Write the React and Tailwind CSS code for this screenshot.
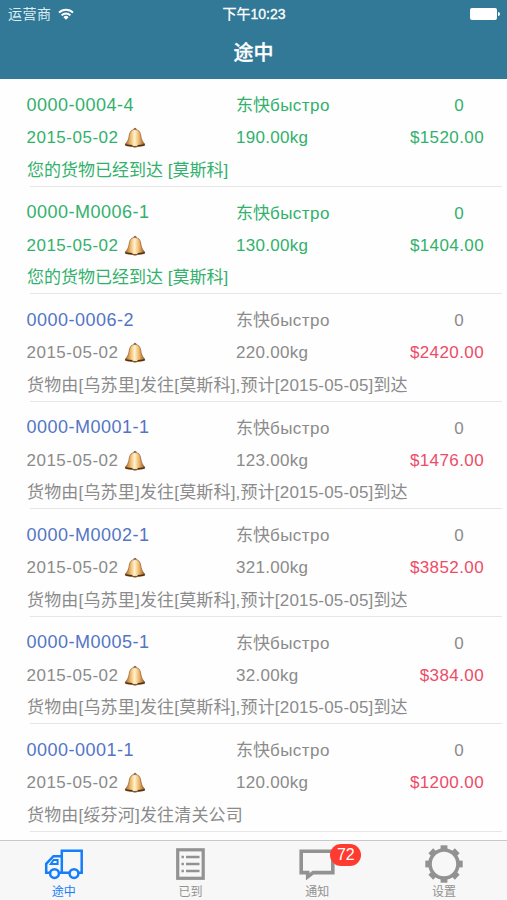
const SHIPMENTS = [
    { id: "0000-0004-4", weight: "190.00kg", price: "$1520.00", status: "您的货物已经到达 [莫斯科]", arrived: true },
    { id: "0000-M0006-1", weight: "130.00kg", price: "$1404.00", status: "您的货物已经到达 [莫斯科]", arrived: true },
    { id: "0000-0006-2", weight: "220.00kg", price: "$2420.00", status: "货物由[乌苏里]发往[莫斯科],预计[2015-05-05]到达" },
    { id: "0000-M0001-1", weight: "123.00kg", price: "$1476.00", status: "货物由[乌苏里]发往[莫斯科],预计[2015-05-05]到达" },
    { id: "0000-M0002-1", weight: "321.00kg", price: "$3852.00", status: "货物由[乌苏里]发往[莫斯科],预计[2015-05-05]到达" },
    { id: "0000-M0005-1", weight: "32.00kg", price: "$384.00", status: "货物由[乌苏里]发往[莫斯科],预计[2015-05-05]到达" },
    { id: "0000-0001-1", weight: "120.00kg", price: "$1200.00", status: "货物由[绥芬河]发往清关公司" },
];

const GEAR_ANGLES = [0, 45, 90, 135, 180, 225, 270, 315];

function Bell() {
    return (
        <svg width="22" height="22" viewBox="0 0 22 22" className="ml-[6px] shrink-0">
            <defs>
                <linearGradient id="bell" x1="0" x2="1" y1="0" y2="0">
                    <stop offset="0" stopColor="#a8672a" />
                    <stop offset="0.28" stopColor="#f0bd70" />
                    <stop offset="0.48" stopColor="#fff3cf" />
                    <stop offset="0.72" stopColor="#eeb465" />
                    <stop offset="1" stopColor="#8f5722" />
                </linearGradient>
            </defs>
            <circle cx="11" cy="2.2" r="1.5" fill="#8c6a45" />
            <ellipse cx="11" cy="19.6" rx="2.2" ry="1.5" fill="#c7a370" />
            <path
                d="M11 2.500c-3.600 0-5.100 2.200-5.700 5.500-.6 3.700-1.300 6.600-3.900 8.800v1.500c2.600 1 5.800 1.200 9.600 1.200s7-.2 9.600-1.200v-1.500c-2.600-2.200-3.300-5.100-3.900-8.800C16.100 4.700 14.600 2.500 11 2.500z"
                fill="url(#bell)"
                stroke="#936137"
                strokeWidth="0.7"
            />
            <path d="M1.400 16.900c5.200 1.300 14 1.300 19.200 0v1.700c-5.200 1.300-14 1.300-19.200 0z" fill="#4f2f15" />
            <path d="M8.500 18.500h5" stroke="#f3dfb0" strokeWidth="1" />
        </svg>
    );
}

function Wifi() {
    return (
        <svg width="16" height="12" viewBox="0 0 16 12" fill="none" stroke="#fff" strokeWidth="2">
            <path d="M1 4.600a10 10 0 0 1 14 0" />
            <path d="M3.600 7.400a6.300 6.300 0 0 1 8.800 0" />
            <path d="M8 11.800 5.400 9.200a3.600 3.600 0 0 1 5.200 0z" fill="#fff" stroke="none" />
        </svg>
    );
}

function Truck() {
    return (
        <svg width="40" height="32" viewBox="0 0 40 32" fill="none" stroke="#147efb" strokeWidth="2.5">
            <path d="M35.500 24.700h3.200V2.700H18.800v22H26" />
            <path d="M18.800 8.200H10.500L3.200 15.800v8.900h3.600M16.500 24.700h2.500" />
            <path d="M7.800 16 10.600 12h4v4z" strokeWidth="2" />
            <circle cx="11.500" cy="25.600" r="4.400" />
            <circle cx="31" cy="25.600" r="4.400" />
        </svg>
    );
}

function ListIcon() {
    return (
        <svg width="30" height="32" viewBox="0 0 30 32" fill="none" stroke="#929292">
            <rect x="2.700" y="1.800" width="25.500" height="28.500" strokeWidth="3.200" />
            <path d="M6.500 9h2.400M6.500 16h2.400M6.500 23h2.400" strokeWidth="2.400" />
            <path d="M11 9h13.500M11 16h13.500M11 23h13.500" strokeWidth="2.600" />
        </svg>
    );
}

function Bubble() {
    return (
        <svg width="37" height="32" viewBox="0 0 37 32" fill="none" stroke="#929292" strokeWidth="3.600">
            <path d="M3.200 3.200h31.600v21.400H15.200L9.700 28.800v-4.200H3.200z" />
        </svg>
    );
}

function Gear() {
    return (
        <svg width="38" height="38" viewBox="0 0 38 38">
            {GEAR_ANGLES.map((a) => (
                <path key={a} d="M15.600 0.300h6.800v5h-6.800z" fill="#929292" transform={`rotate(${a} 19 19)`} />
            ))}
            <circle cx="19" cy="19" r="14" fill="none" stroke="#929292" strokeWidth="3.600" />
        </svg>
    );
}

const TABS = [
    { label: "途中", icon: Truck, active: true },
    { label: "已到", icon: ListIcon },
    { label: "通知", icon: Bubble, badge: 72 },
    { label: "设置", icon: Gear },
];

function Shipment({ id, weight, price, status, arrived }) {
    return (
        <li className={`h-[107.5px] flex flex-col pt-[10px] text-[17px] whitespace-nowrap ${arrived ? "text-[#32b16c]" : "text-[#8b8b8b]"}`}>
            <div className="flex h-[33px] items-center pl-[26.5px] pr-[23px]">
                <span className={`w-[209.5px] text-[18px] tracking-[0.5px] ${arrived ? "" : "text-[#5475c4]"}`}>{id}</span>
                <span className="flex-1 pt-px">东快<span className="tracking-[0.45px]">быстро</span></span>
                <span className="w-[50px] text-center pt-px">0</span>
            </div>
            <div className="flex h-[33px] items-center pl-[26.5px] pr-[23px] tracking-[0.4px]">
                <span className="flex w-[209.5px] items-center tracking-[0.5px]">2015-05-02<Bell /></span>
                <span className="flex-1 tracking-[0.3px]">{weight}</span>
                <span className={arrived ? "" : "text-[#ed4c67]"}>{price}</span>
            </div>
            <p className={`h-[31px] pl-[27px] leading-[31px] ${arrived ? "" : "tracking-[0.18px]"}`}>{status}</p>
            <div className="ml-[30px] mr-[5px] h-px shrink-0 bg-[#e6e6e6]" />
        </li>
    );
}

export default function App() {
    return (
        <div className="flex h-[900px] w-[507px] flex-col overflow-hidden bg-[#fefefe] font-['Liberation_Sans','Noto_Sans_CJK_SC',sans-serif]">
            {/* Status bar and title */}
            <header className="h-[79px] shrink-0 bg-[#327897] text-white">
                <div className="grid h-[28px] grid-cols-3 items-center pl-[8px] pr-[7px] text-[14px]">
                    <div className="flex items-center gap-[6px]">
                        <span className="text-[#d9edf5] tracking-[0.5px]">运营商</span>
                        <Wifi />
                    </div>
                    <span className="text-center [-webkit-text-stroke:0.3px]">下午10:23</span>
                    <div className="flex items-center justify-end gap-px">
                        <div className="h-[12px] w-[27px] rounded-[2px] bg-white" />
                        <div className="h-[4px] w-[2px] rounded-r-full bg-white" />
                    </div>
                </div>
                <h1 className="h-[51px] text-center text-[20px] leading-[50px] font-medium [-webkit-text-stroke:0.3px]">途中</h1>
            </header>

            {/* Shipments */}
            <ul className="h-[761px] shrink-0 overflow-hidden">
                {SHIPMENTS.map((s) => (
                    <Shipment key={s.id} {...s} />
                ))}
            </ul>

            {/* Tab bar */}
            <nav className="grid h-[60px] shrink-0 grid-cols-4 border-t border-[#c9c9c9] bg-[#f7f7f7]">
                {TABS.map(({ label, icon: Icon, active, badge }) => (
                    <div key={label} className={`flex flex-col items-center ${active ? "text-[#147efb]" : "text-[#929292]"}`}>
                        <div className="relative flex h-[44px] items-center pt-[2px]">
                            <Icon />
                            {badge && (
                                <span className="absolute left-[32px] top-[3px] h-[22px] w-[31px] rounded-full bg-[#ff3b30] text-center text-[16px] leading-[22px] text-white">
                                    {badge}
                                </span>
                            )}
                        </div>
                        <span className="pl-px text-[12px] leading-[14px]">{label}</span>
                    </div>
                ))}
            </nav>
        </div>
    );
}
